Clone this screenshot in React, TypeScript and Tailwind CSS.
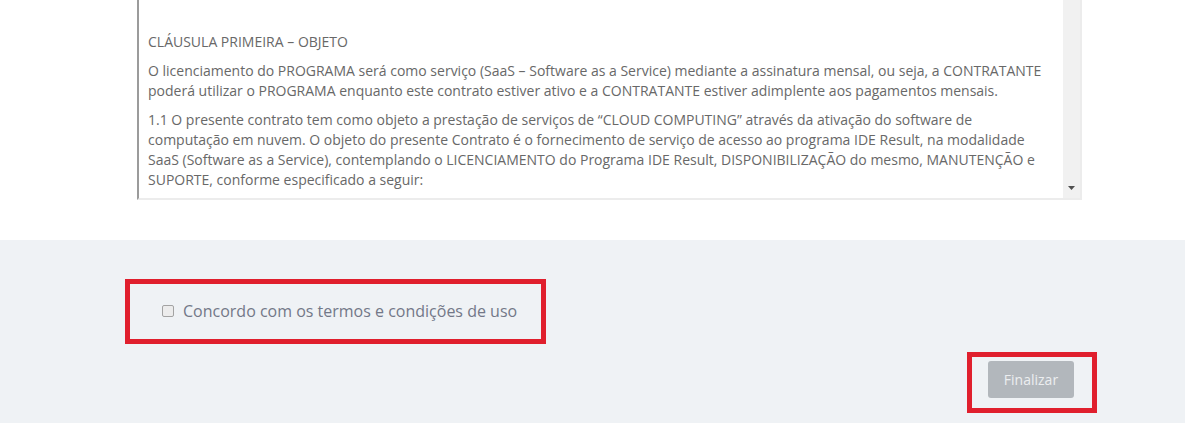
import React from "react";

const paragraphs = [
  "CLÁUSULA PRIMEIRA – OBJETO",
  "O licenciamento do PROGRAMA será como serviço (SaaS – Software as a Service) mediante a assinatura mensal, ou seja, a CONTRATANTE poderá utilizar o PROGRAMA enquanto este contrato estiver ativo e a CONTRATANTE estiver adimplente aos pagamentos mensais.",
  "1.1 O presente contrato tem como objeto a prestação de serviços de “CLOUD COMPUTING” através da ativação do software de computação em nuvem. O objeto do presente Contrato é o fornecimento de serviço de acesso ao programa IDE Result, na modalidade SaaS (Software as a Service), contemplando o LICENCIAMENTO do Programa IDE Result, DISPONIBILIZAÇÃO do mesmo, MANUTENÇÃO e SUPORTE, conforme especificado a seguir:",
];

function TermsBox() {
  return (
    <div className="w-[945px] h-[200px] flex overflow-hidden border-l-2 border-r-2 border-b-2 border-l-[#9b9b9b] border-r-[#ececec] border-b-[#ececec]">
      <div className="flex-1 pl-[9px] pr-[10px] pt-[32px] text-[14px] leading-[20px] text-[#686868]">
        {paragraphs.map((p, i) => (
          <p key={i} className="mb-[9px]">
            {p}
          </p>
        ))}
      </div>
      <div className="w-[17px] bg-[#f1f1f1] flex flex-col justify-end items-center pb-[8px]">
        <svg width="7" height="4" viewBox="0 0 7 4">
          <path d="M0 0 H7 L3.5 4 Z" fill="#505050" />
        </svg>
      </div>
    </div>
  );
}

export default function App() {
  return (
    <div className="w-[1185px] h-[423px] overflow-hidden bg-white font-['Open_Sans',sans-serif]">
      <div className="h-[240px] pl-[137px]">
        <TermsBox />
      </div>
      <div className="h-[183px] bg-[#eff2f5] flex flex-col pt-[39px]">
        <div className="ml-[125px] w-[421px] h-[65px] border-[5px] border-[#e01f2d] flex items-center pl-[32px] pb-[1px]">
          <div className="w-[12px] h-[12px] rounded-[2px] border border-[#a3a3a3] bg-[#ececec]" />
          <span className="ml-[9px] text-[16px] text-[#737888]">
            Concordo com os termos e condições de uso
          </span>
        </div>
        <div className="self-end mr-[88px] mt-[8px] w-[130px] h-[61px] border-[5px] border-[#e01f2d] pt-[4px] pl-[16px]">
          <button className="w-[86px] h-[37px] rounded-[3px] bg-[#b2b7bc] text-[14px] text-[#eceef0]">
            Finalizar
          </button>
        </div>
      </div>
    </div>
  );
}
